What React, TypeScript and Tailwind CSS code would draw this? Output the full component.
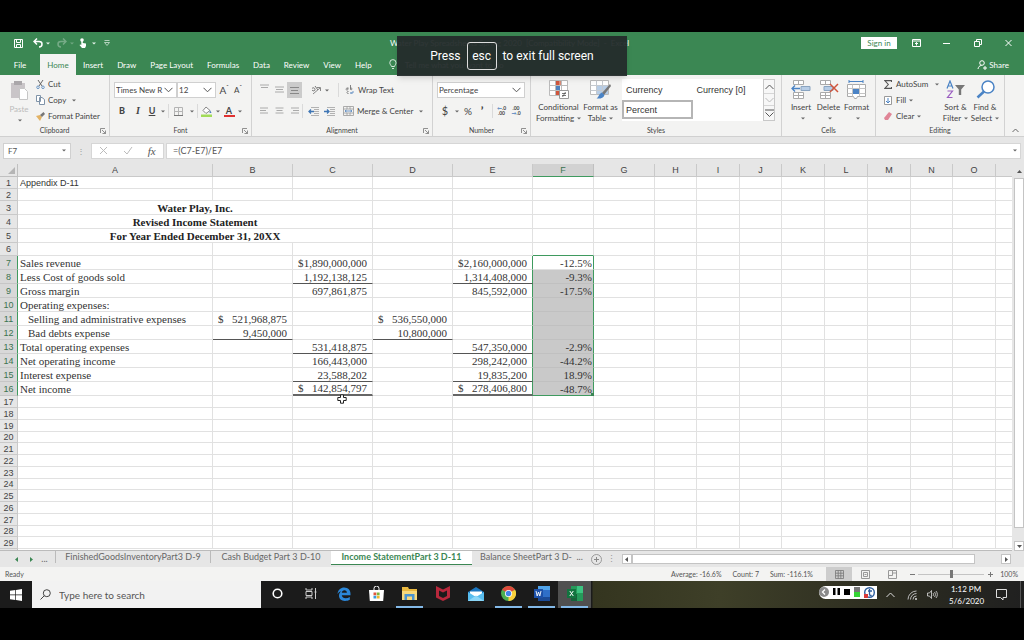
import { useState, type ReactNode } from 'react'
import clsx from 'clsx'

const MENU = ['Insert', 'Draw', 'Page Layout', 'Formulas', 'Data', 'Review', 'View', 'Help']

const COLUMNS = [
  { name: 'A', width: 195 }, { name: 'B', width: 80 }, { name: 'C', width: 80 }, { name: 'D', width: 80 },
  { name: 'E', width: 80 }, { name: 'F', width: 61 }, { name: 'G', width: 61 }, { name: 'H', width: 42 },
  { name: 'I', width: 43 }, { name: 'J', width: 42 }, { name: 'K', width: 43 }, { name: 'L', width: 43 },
  { name: 'M', width: 43 }, { name: 'N', width: 42 }, { name: 'O', width: 43 },
]

// a leading $ is pushed to the left edge of the cell, as in the accounting format
const CELLS: Record<string, string> = {
  A7: 'Sales revenue', C7: '$1,890,000,000', E7: '$2,160,000,000', F7: '-12.5%',
  A8: 'Less Cost of goods sold', C8: '1,192,138,125', E8: '1,314,408,000', F8: '-9.3%',
  A9: 'Gross margin', C9: '697,861,875', E9: '845,592,000', F9: '-17.5%',
  A10: 'Operating expenses:',
  A11: 'Selling and administrative expenses', B11: '$521,968,875', D11: '$536,550,000',
  A12: 'Bad debts expense', B12: '9,450,000', D12: '10,800,000',
  A13: 'Total operating expenses', C13: '531,418,875', E13: '547,350,000', F13: '-2.9%',
  A14: 'Net operating income', C14: '166,443,000', E14: '298,242,000', F14: '-44.2%',
  A15: 'Interest expense', C15: '23,588,202', E15: '19,835,200', F15: '18.9%',
  A16: 'Net income', C16: '$142,854,797', E16: '$278,406,800', F16: '-48.7%',
}

const TITLES: Record<number, string> = {
  3: 'Water Play, Inc.',
  4: 'Revised Income Statement',
  5: 'For Year Ended December 31, 20XX',
}

const UNDERLINED = ['C8', 'E8', 'B12', 'D12', 'C13', 'E13', 'C15', 'E15']
const TOTALS = ['C16', 'E16']
const ROWS = Array.from({ length: 29 }, (_, i) => i + 1)

const isTall = (row: number) => (row >= 3 && row <= 5) || (row >= 7 && row <= 16)
const inSelection = (row: number) => row >= 7 && row <= 16

function rowHeight(row: number) {
  if (isTall(row)) return 'h-[14px]'
  if (row === 6) return 'h-[13px]'
  if (row > 16 && row % 4 === 0) return 'h-[11px]'
  return 'h-[12px]'
}

export default function App() {
  const [formula, setFormula] = useState('=(C7-E7)/E7')

  return (
    <div className="relative flex min-h-screen flex-col bg-black py-8 font-['Lato',sans-serif] text-[8px] leading-[10px] text-[#444]">
      <TitleBar />
      <Ribbon />
      <div className="flex h-[27px] items-center bg-[#e6e6e6] px-[3px] text-[#555]">
        <div className="flex h-4 w-[68px] items-center border border-[#d0d0d0] bg-white pr-1">
          <input aria-label="Name box" defaultValue="F7" className="w-full min-w-0 px-1 outline-none" />
          <Caret />
        </div>
        <span className="flex w-5 justify-center text-[#999]">⋮</span>
        <div className="flex h-4 w-[73px] items-center justify-around border border-[#d6d6d6] bg-white">
          <button aria-label="Cancel"><Svg w={9} h={9}><path d="M1 1l7 7M8 1L1 8" stroke="#bbb" /></Svg></button>
          <button aria-label="Enter"><Svg w={10} h={9}><path d="M1 5l3 3 5-7" stroke="#bbb" /></Svg></button>
          <button aria-label="Insert function" className="font-['Liberation_Serif',serif] text-[11px] italic">fx</button>
        </div>
        <div className="ml-[2px] flex h-4 grow items-center border border-[#d6d6d6] bg-white pr-[3px]">
          <input aria-label="Formula" value={formula} onChange={e => setFormula(e.target.value)}
            className="w-full px-[6px] text-[9px] outline-none" />
          <Caret />
        </div>
      </div>
      <div className="flex bg-[#e6e6e6]">
        <Sheet />
        <div className="ml-[2px] flex w-[10px] shrink-0 flex-col">
          <button aria-label="Scroll up" className="flex h-[14px] items-center justify-center"><Arrow dir="up" /></button>
          <div className="h-[350px] border border-[#c4c4c4] bg-white" />
          <div className="grow" />
          <button aria-label="Scroll down" className="flex h-[10px] items-center justify-center border border-[#c4c4c4] bg-white"><Arrow dir="down" /></button>
        </div>
      </div>
      <SheetTabs />
      <StatusBar />
      <Taskbar />

      <div className="absolute top-9 left-1/2 flex h-10 w-[230px] -translate-x-1/2 items-center justify-center bg-[#242b2b]/95 font-['Roboto',sans-serif] text-[12px] leading-4 text-white shadow-md">
        Press
        <kbd className="mx-[6px] flex h-7 w-[30px] items-center justify-center rounded-[3px] border border-[#ddd] font-['Roboto',sans-serif]">esc</kbd>
        to exit full screen
      </div>
    </div>
  )
}

function Svg({ w, h, children }: { w: number; h: number; children: ReactNode }) {
  return <svg width={w} height={h} viewBox={`0 0 ${w} ${h}`} fill="none" className="shrink-0" aria-hidden="true">{children}</svg>
}

function Caret({ light }: { light?: boolean }) {
  return <Svg w={4} h={3}><path d="M0 .5h4L2 2.5z" fill={light ? '#e8f3ec' : '#666'} /></Svg>
}

function Arrow({ dir }: { dir: 'up' | 'down' | 'left' | 'right' }) {
  const d = { up: 'M0 4h5L2.500 1z', down: 'M0 1h5L2.500 4z', left: 'M4 0v5L1 2.500z', right: 'M1 0v5L4 2.500z' }[dir]
  return <Svg w={5} h={5}><path d={d} fill="#555" /></Svg>
}

function TitleBar() {
  return (
    <header className="bg-[#3b8753] text-white">
      <div className="flex h-[22px] items-center pl-[14px]">
        <button aria-label="Save" className="mr-[10px]">
          <Svg w={9} h={9}><path d="M.5.500h8v8h-8zM2.500.500v3h4v-3M2.500 8.500v-3h4v3" stroke="#fff" /></Svg>
        </button>
        <button aria-label="Undo" className="mr-[7px] flex items-center gap-[3px]">
          <Svg w={10} h={10}><path d="M4 .5L1 3.500l3 3M1 3.500h5c2 0 3 1 3 2.500S8 9 6 9" stroke="#fff" strokeWidth="1.500" /></Svg>
          <Caret light />
        </button>
        <button aria-label="Redo" className="mr-[5px] flex items-center gap-[3px] opacity-30">
          <Svg w={10} h={10}><path d="M6 .5l3 3-3 3M9 3.500H4c-2 0-3 1-3 2.500S2 9 4 9" stroke="#fff" strokeWidth="1.500" /></Svg>
          <Caret light />
        </button>
        <button aria-label="Touch mode" className="mr-[8px] flex items-center gap-[5px]">
          <Svg w={8} h={10}>
            <circle cx="3" cy="2" r="1.800" fill="#fff" />
            <path d="M2.300 2h1.500v3l3.200.600V8L6 10H3L.5 7l.8-.6 1 .6z" fill="#fff" />
          </Svg>
          <Caret light />
        </button>
        <button aria-label="Customize toolbar"><Svg w={6} h={6}><path d="M.5.500h5M.5 2.500h5l-2.500 3z" stroke="#cfe5d6" strokeWidth=".8" /></Svg></button>
        <span className="ml-[280px] whitespace-nowrap">Water Play Spreadsheets Spring 2020&nbsp; [Compatibility Mode]&nbsp; -&nbsp; Excel</span>
        <button className="mr-[15px] ml-auto h-3 w-9 bg-white text-[#3b8753]">Sign in</button>
        <button aria-label="Ribbon display options" className="mr-[22px]">
          <Svg w={9} h={8}><path d="M.5.500h8v7h-8zM.5 2h8M4.500 6.500v-3M3 5l1.500-1.500L6 5" stroke="#fff" /></Svg>
        </button>
        <button aria-label="Minimize" className="mr-[24px]"><Svg w={7} h={8}><path d="M0 4.500h7" stroke="#fff" /></Svg></button>
        <button aria-label="Restore" className="mr-[23px]"><Svg w={8} h={8}><path d="M.5 2.500h5v5h-5zM2.500 2V.500h5v5H6" stroke="#fff" /></Svg></button>
        <button aria-label="Close" className="mr-3"><Svg w={7} h={8}><path d="M.5 1l6 6M6.500 1l-6 6" stroke="#fff" /></Svg></button>
      </div>
      <nav className="flex h-[21px] items-stretch">
        <button className="w-10">File</button>
        <button className="w-9 bg-[#f3f3f2] text-[#3b8753]">Home</button>
        {MENU.map(m => <button key={m} className="px-[7px]">{m}</button>)}
        <button className="ml-[10px] flex items-center gap-2">
          <Svg w={8} h={11}><path d="M2.500 7.500C2 6 .8 5.500.8 3.700a3.100 3.100 0 016.200 0C7 5.500 6 6 5.500 7.500zM3 9.500h2" stroke="#e8f3ec" strokeWidth=".9" /></Svg>
          Tell me what you want to do
        </button>
        <button className="mr-[15px] ml-auto flex items-center gap-[2px]">
          <Svg w={10} h={10}><circle cx="5" cy="3" r="2.300" stroke="#fff" /><path d="M1 9c.3-2 1.500-3.500 3.500-3.500M6 8h4M8 6v4" stroke="#fff" /></Svg>
          Share
        </button>
      </nav>
    </header>
  )
}

function Group({ label, launcher, className, children }: {
  label: string; launcher?: boolean; className: string; children: ReactNode
}) {
  return (
    <section className={clsx('flex shrink-0 flex-col border-r border-[#d2d2d2]', className)}>
      <div className="flex h-[49px]">{children}</div>
      <div className="relative text-center text-[7px] leading-[12px]">
        {label}
        {launcher && (
          <button aria-label={label + ' settings'} className="absolute top-1 right-[3px]">
            <Svg w={6} h={6}><path d="M.5 5V.500H5M2 2l3.500 3.500M5.500 2.500v3h-3" stroke="#777" strokeWidth=".8" /></Svg>
          </button>
        )}
      </div>
    </section>
  )
}

function Tool({ label, className, children }: { label: string; className: string; children: ReactNode }) {
  return <button aria-label={label} className={clsx('flex h-4 shrink-0 items-center justify-center', className)}>{children}</button>
}

const Divider = () => <span className="h-[14px] w-px shrink-0 bg-[#dadada]" />

function Picker({ label, options, className }: { label: string; options: string[]; className: string }) {
  return (
    <label className={clsx('relative flex h-4 items-center border border-[#d0d0d0] bg-white', className)}>
      <select aria-label={label} className="w-full appearance-none pl-px outline-none">
        {options.map(o => <option key={o}>{o}</option>)}
      </select>
      <span className="pointer-events-none absolute right-[3px]">
        <Svg w={9} h={6}><path d="M.5.800l4 4 4-4" stroke="#555" /></Svg>
      </span>
    </label>
  )
}

function Lines({ w, align }: { w: [number, number, number]; align: 'l' | 'c' | 'r' }) {
  const start = (n: number) => (align === 'l' ? 0 : align === 'c' ? (9 - n) / 2 : 9 - n)
  return (
    <Svg w={9} h={8}>
      {w.map((n, i) => <path key={i} d={`M${start(n)} ${i * 2.5 + 1}h${n}`} stroke="#aaa" />)}
    </Svg>
  )
}

function BigTool({ label, className, children }: { label: ReactNode; className: string; children: ReactNode }) {
  return (
    <button className={clsx('flex shrink-0 flex-col items-center justify-start pt-[5px] leading-[11px]', className)}>
      {children}
      <span className="mt-[3px] whitespace-nowrap">{label}</span>
    </button>
  )
}

function Down() {
  return <span className="ml-[3px] inline-flex h-[6px] items-center align-middle"><Caret /></span>
}

function Ribbon() {
  return (
    <div className="flex h-[62px] border-b border-[#d0d0d0] bg-[#f3f3f2] whitespace-nowrap">
      <Group label="Clipboard" launcher className="w-[110px]">
        <BigTool className="ml-1 w-[30px] text-[#bbb]" label={<>Paste<br /><Down /></>}>
          <Svg w={18} h={21}>
            <path d="M1 3h14v15H1z" fill="#c9c5c8" /><path d="M4 1h8v4H4z" fill="#aaa7aa" />
            <path d="M9.500 8.500h5l3 3v8h-8z" fill="#fff" stroke="#c6c6c6" />
          </Svg>
        </BigTool>
        <div className="flex flex-col pt-px pl-[2px]">
          <button className="flex h-4 items-center gap-[3px]">
            <Svg w={9} h={9}><path d="M2 0l4 6M7 0L3 6" stroke="#666" /><circle cx="2" cy="7.300" r="1.300" stroke="#6d97c5" /><circle cx="7" cy="7.300" r="1.300" stroke="#6d97c5" /></Svg>
            Cut
          </button>
          <button className="flex h-4 items-center gap-[3px]">
            <Svg w={9} h={10}><path d="M.5.500h4v6h-4zM3.500 2.500H6l2.500 2v5h-5z" fill="#fff" stroke="#7f93a8" /></Svg>
            Copy <Down />
          </button>
          <button className="flex h-4 items-center gap-[3px]">
            <Svg w={9} h={9}><path d="M0 4l4-1 2 2-2 4z" fill="#e2b264" /><path d="M4 3l2 2 3-3-1.500-2z" fill="#777" /></Svg>
            Format Painter
          </button>
        </div>
      </Group>

      <Group label="Font" launcher className="w-[142px]">
        <div className="flex flex-col gap-[5px] pt-[7px] pl-1">
          <div className="flex">
            <Picker label="Font name" options={['Times New R']} className="w-[63px]" />
            <Picker label="Font size" options={['12', '14']} className="w-[39px]" />
            <Tool label="Increase font size" className="w-4 text-[10px]">A<sup className="text-[6px]">ˆ</sup></Tool>
            <Tool label="Decrease font size" className="w-3">A<sup className="text-[6px]">ˇ</sup></Tool>
          </div>
          <div className="flex items-center">
            <Tool label="Bold" className="w-4 text-[9px] font-black">B</Tool>
            <Tool label="Italic" className="w-4 font-['Liberation_Serif',serif] text-[10px] font-bold italic">I</Tool>
            <Tool label="Underline" className="w-3 text-[9px] font-bold underline">U</Tool>
            <Tool label="Underline style" className="w-[10px]"><Caret /></Tool>
            <Divider />
            <Tool label="Borders" className="w-[18px]">
              <Svg w={9} h={9}><path d="M.5.500h8v8h-8zM4.500.500v8M.5 4.500h8" stroke="#b4b4b4" /><path d="M0 8.500h9" stroke="#777" /></Svg>
            </Tool>
            <Tool label="Border style" className="w-[10px]"><Caret /></Tool>
            <Divider />
            <Tool label="Fill color" className="w-[17px]">
              <Svg w={11} h={11}><path d="M5 1l4 3.500-4 3-3-3z" fill="#fff" stroke="#888" /><path d="M9 4l1.500 3H8.500z" fill="#4f81bd" /><path d="M0 8.500h11v2.500H0z" fill="#a2dc58" /></Svg>
            </Tool>
            <Tool label="Fill options" className="w-[6px]"><Caret /></Tool>
            <Tool label="Font color" className="w-4">
              <span className="h-[11px] w-[11px] border-b-2 border-[#e03131] text-[9px] leading-[9px] font-bold">A</span>
            </Tool>
            <Tool label="Font color options" className="w-[6px]"><Caret /></Tool>
          </div>
        </div>
      </Group>

      <Group label="Alignment" launcher className="w-[181px]">
        <div className="flex grow flex-col gap-[5px] pt-[7px] pl-[5px]">
          <div className="flex items-center">
            <Tool label="Top align" className="w-[15px] pb-1"><Lines w={[9, 7, 0]} align="c" /></Tool>
            <Tool label="Middle align" className="w-[15px]"><Lines w={[9, 7, 9]} align="c" /></Tool>
            <Tool label="Bottom align" className="w-[15px] bg-[#cbcbcb]">
              <Svg w={9} h={10}><path d="M0 2.500h9M1 5.500h7M0 8.500h9" stroke="#888" /></Svg>
            </Tool>
            <Tool label="Orientation" className="ml-2 w-5 gap-[3px]">
              <Svg w={11} h={10}><path d="M2 9l7-6M9.500 6V2.500H6" stroke="#888" /><path d="M1 3.500c1-1.500 3-.5 3 1s-2 2-3 .5M4 1l3 4" stroke="#777" /></Svg>
              <Caret />
            </Tool>
            <span className="w-2" />
            <Divider />
            <button className="flex h-4 items-center gap-1 pl-[6px]">
              <Svg w={9} h={10}><path d="M3 3.500c-1-1-2 0-2 .7s1 1.300 2 .3V2.500M5.500 0v4.500c2 1 2-2 0-1.500M3.500 6.500c-2-.5-2 2.500 0 2" stroke="#666" strokeWidth=".8" /><path d="M8 6v2H5.500M6.500 7l-1 1 1 1" stroke="#4f81bd" strokeWidth=".8" /></Svg>
              Wrap Text
            </button>
          </div>
          <div className="flex items-center">
            <Tool label="Align left" className="w-[15px]"><Lines w={[8, 6, 8]} align="l" /></Tool>
            <Tool label="Center" className="w-[15px]"><Lines w={[8, 6, 8]} align="c" /></Tool>
            <Tool label="Align right" className="w-[15px]"><Lines w={[8, 6, 8]} align="r" /></Tool>
            <Divider />
            <Tool label="Decrease indent" className="ml-[2px] w-4"><Indent d="M6 4.500H1M3 2.500l-2 2 2 2" /></Tool>
            <Tool label="Increase indent" className="w-4"><Indent d="M0 4.500h5M3 2.500l2 2-2 2" /></Tool>
            <button className="flex h-4 items-center gap-[3px] pl-[6px]">
              <Svg w={11} h={10}><path d="M.5.500h10v9H.500zM.5 3h10M.5 7h10M4 .5V3M7 .5V3M4 7v2.500M7 7v2.500" stroke="#999" strokeWidth=".8" /><path d="M2 5h7M3.500 4L2 5l1.500 1M7.500 4L9 5 7.500 6" stroke="#4f81bd" strokeWidth=".8" /></Svg>
              Merge &amp; Center
            </button>
            <Tool label="Merge options" className="ml-[6px] w-1"><Caret /></Tool>
          </div>
        </div>
      </Group>

      <Group label="Number" launcher className="w-[98px]">
        <div className="flex flex-col gap-[5px] pt-[7px] pl-1">
          <Picker label="Number format" options={['Percentage', 'Currency']} className="w-[88px]" />
          <div className="flex items-center">
            <Tool label="Accounting format" className="w-4 text-[11px]">$</Tool>
            <Tool label="Accounting options" className="w-[7px]"><Caret /></Tool>
            <Tool label="Percent style" className="w-4 text-[10px]">%</Tool>
            <Tool label="Comma style" className="w-3 text-[12px] font-black">’</Tool>
            <span className="w-1" />
            <Divider />
            <Tool label="Increase decimal" className="w-[17px]">
              <span className="text-[5px] leading-[5px] font-bold"><span className="text-[#4f81bd]">←</span>.0<br />.00</span>
            </Tool>
            <Tool label="Decrease decimal" className="w-3">
              <span className="text-[5px] leading-[5px] font-bold">.00<br /><span className="text-[#4f81bd]">→</span>.0</span>
            </Tool>
          </div>
        </div>
      </Group>

      <Group label="Styles" className="w-[251px]">
        <BigTool className="ml-[5px] w-[45px]" label={<>Conditional<br />Formatting<Down /></>}>
          <Svg w={20} h={19}>
            <path d="M.5.500h18v15H.500zM.5 5.500h18M.5 10.500h18M6.500.500v15M12.500.500v15" fill="#fff" stroke="#bbb" />
            <path d="M7 1h3v4H7zM7 11h5v4H7z" fill="#d0553c" /><path d="M7 6h4v4H7z" fill="#4f81bd" /><path d="M10 1h2v4h-2z" fill="#d98b78" />
            <path d="M10.500 10.500h9v8h-9z" fill="#fff" stroke="#999" /><path d="M13 13.500h4M13 15.500h4M16.500 12l-3 5" stroke="#555" strokeWidth=".8" />
          </Svg>
        </BigTool>
        <BigTool className="w-[39px]" label={<>Format as<br />Table<Down /></>}>
          <Svg w={21} h={19}>
            <path d="M.5.500h18v14H.500z" fill="#fff" stroke="#bbb" /><path d="M6 5h12v9H6z" fill="#b7cde6" />
            <path d="M.5 5.500h18M.5 10.500h18M6.500.500v14M12.500.500v14" stroke="#c4c9cf" />
            <path d="M20 4l1 2-7 9-2-2z" fill="#777" /><path d="M12 12.500l2.500 2.500c-1 3-4 4-8 3.500 2-1 2.500-5 5.500-6z" fill="#4a83c5" />
          </Svg>
        </BigTool>
        <div className="mt-1 ml-[2px] flex h-[42px] font-['Liberation_Sans',sans-serif] text-[9px] text-[#333]">
          <div className="grid w-[141px] grid-cols-2 grid-rows-2 bg-white text-left">
            <button className="pl-1 text-left">Currency</button>
            <button className="pl-1 text-left">Currency [0]</button>
            <button className="mb-[2px] border-2 border-[#b5b5b5] pl-[2px] text-left">Percent</button>
          </div>
          <div className="flex w-3 flex-col border border-[#c8c8c8] bg-[#f7f7f7]">
            <Tool label="Previous styles" className="h-[13px]"><Svg w={9} h={6}><path d="M.5 5l4-4 4 4" stroke="#555" /></Svg></Tool>
            <Tool label="Next styles" className="h-[13px] border-y border-[#d6d6d6]"><Svg w={9} h={6}><path d="M.5 1l4 4 4-4" stroke="#bbb" /></Svg></Tool>
            <Tool label="More styles" className="h-[14px]"><Svg w={9} h={9}><path d="M0 1h9M.5 3.500l4 4 4-4" stroke="#555" /></Svg></Tool>
          </div>
        </div>
      </Group>

      <Group label="Cells" className="w-[94px]">
        <BigTool className="ml-[6px] w-[26px]" label={<>Insert<br /><Down /></>}>
          <Svg w={20} h={19}>
            <path d="M2.500.500h10v4h-10zM7.500.500v4M2.500 12.500h10v6h-10zM2.500 15.500h10M7.500 12.500v6" fill="#fff" stroke="#aaa" />
            <path d="M10 6.500h9v4h-9z" fill="#b7cde6" stroke="#8aa4c0" /><path d="M9 8.500H1M4 5.500l-3 3 3 3" stroke="#4a83c5" strokeWidth="1.300" />
          </Svg>
        </BigTool>
        <BigTool className="w-[29px]" label={<>Delete<br /><Down /></>}>
          <Svg w={20} h={19}>
            <path d="M1.500.500h10v4h-10zM6.500.500v4M1.500 12.500h10v6h-10zM1.500 15.500h10M6.500 12.500v6" fill="#fff" stroke="#aaa" />
            <path d="M5 6.500h9v4H5z" fill="#b7cde6" stroke="#8aa4c0" /><path d="M11 4l8 8M19 4l-8 8" stroke="#d0553c" strokeWidth="1.500" />
          </Svg>
        </BigTool>
        <BigTool className="w-[27px]" label={<>Format<br /><Down /></>}>
          <Svg w={19} h={19}>
            <path d="M2 1.500h14M2 0v3M16 0v3" stroke="#4a83c5" />
            <path d="M.5 4.500h18v12h-8l-1 2h-2l-1-2h-6z" fill="#fff" stroke="#aaa" /><path d="M.5 8.500h18M.5 13.500h18M5.500 4.500v12M12.500 4.500v12" stroke="#c4c4c4" />
            <path d="M6 9h6v5H6z" fill="#4a83c5" />
          </Svg>
        </BigTool>
      </Group>

      <Group label="Editing" className="w-[129px]">
        <div className="flex w-[64px] flex-col pt-px pl-2">
          <button className="flex h-4 items-center gap-1">
            <Svg w={8} h={9}><path d="M7.500 2V.600H.800L4.300 4.500.8 8.400h6.700V7" stroke="#555" strokeWidth="1.100" /></Svg>
            AutoSum <span className="ml-[3px]"><Caret /></span>
          </button>
          <button className="flex h-4 items-center gap-1">
            <Svg w={8} h={9}><path d="M.5.500h7v8h-7z" fill="#fff" stroke="#999" /><path d="M4 2v5M2 5l2 2 2-2" stroke="#4a83c5" /></Svg>
            <span>Fill<Down /></span>
          </button>
          <button className="flex h-4 items-center gap-1">
            <Svg w={8} h={8}><path d="M0 6l5-6 3 2-4 6H1z" fill="#e08597" /></Svg>
            <span>Clear<Down /></span>
          </button>
        </div>
        <BigTool className="w-[31px]" label={<>Sort &amp;<br />Filter<Down /></>}>
          <Svg w={19} h={19}>
            <path d="M1 8.500L4 1l3 7.500M2 6h4" stroke="#4a83c5" strokeWidth="1.200" /><path d="M1.500 11h5l-5 6.500h5" stroke="#9a5cc0" strokeWidth="1.200" />
            <path d="M9 5h10l-3.800 4.500V15h-2.400V9.500z" fill="#777" />
          </Svg>
        </BigTool>
        <BigTool className="w-[28px]" label={<>Find &amp;<br />Select<Down /></>}>
          <Svg w={19} h={19}><circle cx="12" cy="7" r="6" fill="#fff" stroke="#4a83c5" strokeWidth="1.500" /><path d="M8 11.500l-6.500 6" stroke="#4a83c5" strokeWidth="2.500" /></Svg>
        </BigTool>
      </Group>
      <button aria-label="Collapse ribbon" className="ml-auto flex w-[18px] items-end justify-center pb-[3px]">
        <Svg w={7} h={5}><path d="M.5 4l3-3 3 3" stroke="#666" /></Svg>
      </button>
    </div>
  )
}

function Indent({ d }: { d: string }) {
  return (
    <Svg w={11} h={9}>
      <path d="M3 .5h8M6 2.500h5M6 4.500h5M6 6.500h5M3 8.500h8" stroke="#aaa" strokeWidth=".9" />
      <path d={d} stroke="#3f76b5" strokeWidth="1.300" />
    </Svg>
  )
}

function Sheet() {
  return (
    <div className="h-[387px] min-w-0 grow overflow-hidden border-b border-[#bbb] bg-white">
      <table className="w-full table-fixed border-separate border-spacing-0 text-[#333]">
        <colgroup>
          <col className="w-[18px]" />
          {COLUMNS.map(c => <col key={c.name} style={{ width: c.width }} />)}
          <col />
        </colgroup>
        <thead>
          <tr className="h-[13px] bg-[#e6e6e6] font-['Liberation_Sans',sans-serif] text-[9px] text-[#444]">
            <th className="border-r border-b border-[#c0c0c0] p-0">
              <span className="flex justify-end pr-[2px]"><Svg w={7} h={7}><path d="M7 0v7H0z" fill="#b5b5b5" /></Svg></span>
            </th>
            {COLUMNS.map(c => (
              <th key={c.name} className={clsx('border-r border-b p-0 font-normal', c.name === 'F'
                ? 'border-r-[#c0c0c0] border-b-[#3f9a5f] bg-[#d2d2d2] text-[#3b7350]' : 'border-[#c9c9c9]')}>{c.name}</th>
            ))}
            <th className="border-b border-[#c9c9c9] p-0" />
          </tr>
        </thead>
        <tbody>
          {ROWS.map(row => <SheetRow key={row} row={row} />)}
          <tr className="h-1"><th className="border-r border-[#c0c0c0] bg-[#e6e6e6] p-0" /></tr>
        </tbody>
      </table>
    </div>
  )
}

function SheetRow({ row }: { row: number }) {
  const title = TITLES[row]
  const columns = title ? COLUMNS.slice(3) : COLUMNS

  return (
    <tr className={clsx('leading-[10px]', rowHeight(row))}>
      <th scope="row" className={clsx("border-r border-b p-0 font-['Liberation_Sans',sans-serif] text-[9px] font-normal",
        inSelection(row) ? 'border-r-[#3f9a5f] border-b-[#c6c6c6] bg-[#d8d8d8] text-[#3b7350]' : 'border-[#c9c9c9] bg-[#e6e6e6] text-[#444]')}>
        {row}
      </th>
      {title && (
        <td colSpan={3} className="border-r border-b border-[#e1e1e1] p-0 text-center font-['Liberation_Serif',serif] text-[11px] font-bold text-[#222]">{title}</td>
      )}
      {columns.map(c => <Cell key={c.name} col={c.name} row={row} />)}
      <td className="border-b border-[#e1e1e1] p-0" />
    </tr>
  )
}

function Cell({ col, row }: { col: string; row: number }) {
  const id = col + row
  if (id === 'A1') {
    return <td className="border-r border-b border-[#e1e1e1] p-0 pl-[2px] font-['Liberation_Sans',sans-serif] text-[9px]">Appendix D-11</td>
  }

  const value = CELLS[id] ?? ''
  const selected = inSelection(row)
  const money = value.startsWith('$')

  return (
    <td className={clsx("relative border-r border-b p-0 font-['Liberation_Serif',serif] text-[11px] leading-[10px] whitespace-nowrap",
      col === 'A' ? 'text-left' : 'text-right',
      col === 'A' && (row === 11 || row === 12 ? 'pl-[10px]' : 'pl-[2px]'),
      col === 'F' ? 'pr-px' : col !== 'A' && 'pr-[5px]',
      selected && (col === 'E' || col === 'F') ? 'border-r-[#3f9a5f]' : 'border-r-[#e1e1e1]',
      UNDERLINED.includes(id) ? 'border-b-[#555]'
        : TOTALS.includes(id) ? 'border-b-2 border-b-[#666]'
        : id === 'F6' || id === 'F16' ? 'border-b-[#3f9a5f]'
        : col === 'F' && selected && row > 7 ? 'border-b-[#c0c0c0]' : 'border-b-[#e1e1e1]',
      col === 'F' && selected && row > 7 && 'bg-[#c9c9c9]')}>
      {money
        ? <span className="flex justify-between pl-[5px]"><span>$</span><span>{value.slice(1)}</span></span>
        : value}
      {id === 'F16' && <span className="absolute -right-px -bottom-px h-[3px] w-[3px] bg-[#3b8753]" />}
      {id === 'C17' && (
        <span className="absolute -top-[2px] left-11">
          <Svg w={10} h={10}><path d="M3.500.800h3v2.700h2.700v3H6.500v2.700h-3V6.500H.800v-3h2.700z" fill="#fff" stroke="#222" /></Svg>
        </span>
      )}
    </td>
  )
}

function SheetTabs() {
  return (
    <div className="flex h-[16px] items-center bg-[#e6e6e6] text-[9px] whitespace-nowrap text-[#666]">
      <button aria-label="Previous sheet" className="ml-[14px]"><Svg w={5} h={5}><path d="M4 0v5L1 2.500z" fill="#3b8753" /></Svg></button>
      <button aria-label="Next sheet" className="ml-[10px]"><Svg w={5} h={5}><path d="M1 0v5L4 2.500z" fill="#3b8753" /></Svg></button>
      <span className="w-[21px] text-center">...</span>
      <button className="h-3 w-[155px] self-start border-l border-[#bbb]">FinishedGoodsInventoryPart3 D-9</button>
      <button className="h-3 w-[121px] self-start border-l border-[#bbb]">Cash Budget Part 3 D-10</button>
      <button className="h-[14px] w-[141px] self-start border-b border-[#3b8753] bg-white pb-px font-bold text-[#3b8753]">Income StatementPart 3 D-11</button>
      <button className="ml-[8px] h-3 self-start">Balance SheetPart 3 D-&nbsp; ...</button>
      <button aria-label="New sheet" className="ml-[8px]"><Svg w={11} h={11}><circle cx="5.500" cy="5.500" r="5" stroke="#999" /><path d="M3 5.500h5M5.500 3v5" stroke="#888" /></Svg></button>
      <span className="mx-2 flex w-1 justify-center text-[#999]">⋮</span>
      <button aria-label="Scroll left" className="flex h-[10px] w-[10px] items-center justify-center border border-[#c4c4c4] bg-white"><Arrow dir="left" /></button>
      <div className="h-[10px] grow border border-[#c4c4c4] bg-white" />
      <div className="w-[26px]" />
      <button aria-label="Scroll right" className="mr-[13px] flex h-[10px] w-[10px] items-center justify-center border border-[#c4c4c4] bg-white"><Arrow dir="right" /></button>
    </div>
  )
}

function StatusBar() {
  return (
    <div className="flex h-[14px] items-center bg-[#f3f3f2] pl-[5px] text-[7px] text-[#555]">
      <span className="grow">Ready</span>
      <span className="mr-[11px]">Average: -16.6%</span>
      <span className="mr-[11px]">Count: 7</span>
      <span className="mr-[13px]">Sum: -116.1%</span>
      <button aria-label="Normal view" className="flex h-full w-[26px] items-center justify-center bg-[#cdcdcd]">
        <Svg w={9} h={9}><path d="M.5.500h8v8h-8zM.5 3.200h8M.5 5.800h8M3.200.500v8M5.800.500v8" stroke="#777" strokeWidth=".8" /></Svg>
      </button>
      <button aria-label="Page layout" className="flex w-[27px] justify-center">
        <Svg w={9} h={9}><path d="M.5.500h8v8h-8zM2.500 2.500h4v4h-4zM3.500 4.500h2" stroke="#999" /></Svg>
      </button>
      <button aria-label="Page break preview" className="flex w-[27px] justify-center">
        <Svg w={9} h={9}><path d="M.5 8.500v-8h8v8zM.5 5.500h4v-5M4.500 3h4" stroke="#999" /></Svg>
      </button>
      <button aria-label="Zoom out" className="flex w-[12px] justify-center"><Svg w={5} h={5}><path d="M0 2.500h5" stroke="#777" /></Svg></button>
      <input type="range" aria-label="Zoom" min="10" max="190" defaultValue="100"
        className="h-[9px] w-[66px] appearance-none bg-[linear-gradient(#c4c4c4,#c4c4c4)] bg-[length:100%_1px] bg-center bg-no-repeat [&::-webkit-slider-thumb]:h-2 [&::-webkit-slider-thumb]:w-[3px] [&::-webkit-slider-thumb]:appearance-none [&::-webkit-slider-thumb]:bg-[#777]" />
      <button aria-label="Zoom in" className="flex w-[12px] justify-center"><Svg w={5} h={5}><path d="M0 2.500h5M2.500 0v5" stroke="#777" /></Svg></button>
      <span className="w-[28px] pr-[6px] text-right">100%</span>
    </div>
  )
}

function Task({ label, open, active, children }: { label: string; open?: boolean; active?: boolean; children: ReactNode }) {
  return (
    <button aria-label={label} className={clsx('flex h-full w-[33px] items-center justify-center px-[3px]', active && 'bg-[#505050]')}>
      <span className={clsx('flex h-full w-full items-center justify-center border-b-2', open ? 'border-[#83b9e8]' : 'border-transparent')}>
        {children}
      </span>
    </button>
  )
}

function Taskbar() {
  return (
    <footer className="flex h-[27px] items-center bg-[linear-gradient(90deg,#1b1b1b_0,#1b1b1b_592px,#34351f_593px,#3e3f28_720px,#2b2b20_900px,#202020_100%)] text-white">
      <button aria-label="Start" className="flex h-full w-8 items-center justify-center">
        <Svg w={12} h={12}><path d="M0 1.800L5.300 1v4.600H0zM6 .9l6-.9v5.600H6zM0 6.300h5.300v4.700L0 10.200zM6 6.300h6V12l-6-.9z" fill="#fff" /></Svg>
      </button>
      <label className="flex h-full w-[229px] items-center gap-2 bg-[#f2f2f2] pl-2 text-[#555]">
        <Svg w={11} h={11}><circle cx="6.800" cy="4.200" r="3.500" stroke="#444" /><path d="M4.300 6.700L.5 10.500" stroke="#444" /></Svg>
        <input aria-label="Search" placeholder="Type here to search" className="grow text-[10px] outline-none placeholder:text-[#555]" />
      </label>
      <Task label="Cortana"><Svg w={11} h={11}><circle cx="5.500" cy="5.500" r="4.300" stroke="#fff" strokeWidth="1.600" /></Svg></Task>
      <Task label="Task view">
        <Svg w={12} h={11}><path d="M1 0v2h6V0M1 11V9h6v2M1 3.500h6v4H1zM10.500 0v11M9.500 4h2" stroke="#ccc" /></Svg>
      </Task>
      <Task label="Edge">
        <Svg w={14} h={14}><path d="M.5 7C1 2.800 3.800.500 7.200.500c4 0 6.300 2.800 6.300 6.200v1.600H4.800c.2 2 1.800 2.900 3.800 2.900 1.500 0 2.900-.4 4.200-1.200v2.700c-1.300.8-3 1.200-4.800 1.200C4.200 13.900 2 11.800 2 8.700c0-2 1-3.700 2.600-4.700C2.800 4.400 1.400 5.400.5 7zm4.300-1.200h5.100c0-1.500-.8-2.600-2.500-2.600-1.500 0-2.400 1.100-2.600 2.600z" fill="#2b87d9" /></Svg>
      </Task>
      <Task label="Store">
        <Svg w={15} h={15}>
          <path d="M5 4V2.500a2.500 2.500 0 015 0V4" stroke="#fff" /><path d="M0 4h15l-.8 11H.800z" fill="#fff" />
          <path d="M4.500 6.500h2.800v2.800H4.500z" fill="#e2583e" /><path d="M7.800 6.500h2.800v2.800H7.800z" fill="#7eb53c" /><path d="M4.500 9.800h2.800v2.700H4.500z" fill="#3a9bdc" /><path d="M7.800 9.800h2.800v2.700H7.800z" fill="#f0b92c" />
        </Svg>
      </Task>
      <Task label="File Explorer" open>
        <Svg w={15} h={13}><path d="M0 0h6l1 2h8v11H0z" fill="#e9b83f" /><path d="M0 4h15v9H0z" fill="#f7d97b" /><path d="M2.500 7h10v6h-2.500V9.500H5V13H2.500z" fill="#4b94cf" /></Svg>
      </Task>
      <Task label="McAfee">
        <Svg w={14} h={15}><path d="M0 0l7 3.500L14 0v11.500L7 15l-7-3.500z" fill="#b8283c" /><path d="M3 4.500l4 2 4-2v5.500l-4 2-4-2z" fill="#1b1b1b" /></Svg>
      </Task>
      <Task label="Mail">
        <Svg w={16} h={14}><path d="M0 5l8-5 8 5v9H0z" fill="#1b76bf" /><path d="M2 4.500h12V9H2z" fill="#fff" /><path d="M0 5l8 5 8-5v9H0z" fill="#58bdee" /><path d="M0 14l8-5.500L16 14z" fill="#8bd6f7" /></Svg>
      </Task>
      <Task label="Chrome" open>
        <Svg w={15} h={15}>
          <circle cx="7.500" cy="7.500" r="7.500" fill="#4caf50" /><path d="M7.500 7.500L1 3.700A7.500 7.500 0 0114 3.700z" fill="#de4a3c" /><path d="M7.500 7.500L14 3.700A7.500 7.500 0 017.500 15z" fill="#f9cf3c" /><path d="M7.500 4h6.700l-.2-.4z" fill="#de4a3c" />
          <circle cx="7.500" cy="7.500" r="3.500" fill="#fff" /><circle cx="7.500" cy="7.500" r="2.700" fill="#4285e8" />
        </Svg>
      </Task>
      <Task label="Word" open>
        <Svg w={16} h={15}><path d="M4 0h12v15H4z" fill="#2f6fc8" /><path d="M4 0h12v4H4z" fill="#4fa3ea" /><path d="M4 11h12v4H4z" fill="#1b4a96" /><path d="M0 3h9v9H0z" fill="#1c50a8" /><path d="M2 5l1.200 5L4.500 6l1.300 4L7 5" stroke="#fff" strokeWidth=".9" /></Svg>
      </Task>
      <Task label="Excel" open active>
        <Svg w={16} h={15}><path d="M4 0h12v15H4z" fill="#259a5a" /><path d="M10 0h6v7h-6z" fill="#3cc481" /><path d="M4 8h6v7H4z" fill="#17623a" /><path d="M0 3h9v9H0z" fill="#12743f" /><path d="M2.800 5l3.500 5M6.300 5l-3.500 5" stroke="#fff" /></Svg>
      </Task>

      <div className="mr-[9px] mb-[5px] ml-auto flex h-[13px] w-[58px] items-center gap-[4px] rounded-l-full bg-white">
        <Svg w={10} h={10}><circle cx="5" cy="5" r="5" fill="#8a8a8a" /><path d="M6 2.500L3.500 5 6 7.500" stroke="#fff" strokeWidth="1.300" /></Svg>
        <Svg w={7} h={8}><path d="M0 0h2.500v7H0zM4.500 0H7v7H4.500z" fill="#000" /></Svg>
        <Svg w={6} h={6}><path d="M0 0h6v6H0z" fill="#000" /></Svg>
        <Svg w={6} h={10}><path d="M0 0h6v10H0z" fill="#777" /><path d="M0 5h6v5H0z" fill="#35d435" /></Svg>
        <Svg w={11} h={11}><circle cx="5.500" cy="5.500" r="4.800" fill="#fff" stroke="#2e5f9e" strokeWidth="1.400" /><path d="M5.500 2v5.500c0 1 1.500 1 2 .5M4 4h4" stroke="#2e5f9e" strokeWidth="1.300" /><path d="M0 7h4v4H0z" fill="#d83a3a" /></Svg>
      </div>
      <button aria-label="Show hidden icons" className="mr-[12px]"><Svg w={9} h={6}><path d="M.5 5l4-4 4 4" stroke="#ddd" /></Svg></button>
      <button aria-label="Network" className="mr-[10px]"><Svg w={10} h={10}><path d="M1 9.500A8.500 8.500 0 019.500 1M3.500 9.500a6 6 0 016-6M6 9.500A3.500 3.500 0 019.500 6" stroke="#bbb" /><circle cx="9" cy="9" r="1" fill="#ddd" /></Svg></button>
      <button aria-label="Volume" className="mr-[11px]"><Svg w={11} h={9}><path d="M.5 3h2l2-2.500v8L2.500 6h-2zM6 3c.7 1 .7 2 0 3M7.500 2c1.200 1.600 1.200 3.400 0 5M9 1c1.800 2.200 1.800 4.800 0 7" stroke="#ddd" strokeWidth=".8" /></Svg></button>
      <button className="mr-[13px] w-[34px] text-center leading-[12px] whitespace-nowrap">1:12 PM<br />5/6/2020</button>
      <button aria-label="Notifications" className="mr-[13px]"><Svg w={11} h={12}><path d="M.5.500h10v8H7v2.500L4.500 8.500h-4z" stroke="#ddd" /></Svg></button>
      <span className="mr-[3px] h-full w-px bg-[#555]" />
    </footer>
  )
}
